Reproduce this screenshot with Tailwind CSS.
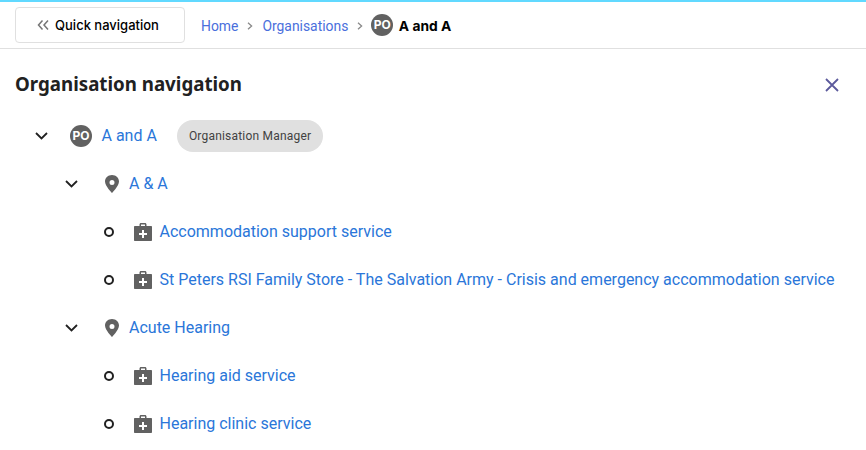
<!DOCTYPE html>
<html lang="en">

<head>
    <meta charset="UTF-8" />
    <title>Organisation navigation</title>
    <script src="https://cdn.jsdelivr.net/npm/@tailwindcss/browser@4"></script>
</head>

<body class="bg-white font-['Roboto',sans-serif] h-[450px] overflow-hidden">

    <!-- top bar -->
    <header class="h-[49px] border-t-2 border-b border-t-[#61d9ff] border-b-[#e0e0e0] flex items-center pl-[15px]">
        <button class="w-[170px] h-[36px] border border-[#e0e0e0] rounded flex items-center justify-center gap-[6px] text-[13px] font-['Inter',sans-serif] font-medium text-black -mt-[1px]">
            <svg class="w-3 h-3 -ml-[4px]" viewBox="0 0 12 12" fill="none" stroke="#757575" stroke-width="1.5"><path d="M5.500 1.500 1.500 6l4 4.500M11 1.500 7 6l4 4.500" /></svg>
            <span class="pt-[2px]">Quick navigation</span>
        </button>
        <nav class="flex items-center ml-4 text-[13.9px] text-[#4a6fdc] mt-[2px]">
            <a>Home</a>
            <svg class="w-2 h-2 mx-[8px]" viewBox="0 0 8 8" fill="none" stroke="#8a8a8a" stroke-width="1.3"><path d="M2 .8 5.600 4 2 7.200" /></svg>
            <a>Organisations</a>
            <svg class="w-2 h-2 mx-[7.500px]" viewBox="0 0 8 8" fill="none" stroke="#8a8a8a" stroke-width="1.3"><path d="M2 .8 5.600 4 2 7.200" /></svg>
            <span class="w-[22px] h-[22px] -mt-[2px] rounded-full bg-[#616161] text-white font-['Inter',sans-serif] text-xs font-bold flex items-center justify-center">PO</span>
            <span class="ml-[5.500px] font-['Inter',sans-serif] text-[13.8px] font-bold text-black">A and A</span>
        </nav>
    </header>

    <main class="relative">
        <h1 class="pl-[15px] pt-[23px] h-[63px] font-['Noto_Sans',sans-serif] text-[18.72px] leading-6 font-bold text-[#212121]">Organisation navigation</h1>
        <button class="absolute right-[26px] top-[28px]">
            <svg class="w-[16px] h-[16px]" viewBox="0 0 16 16" fill="none" stroke="#5c5a9c" stroke-width="1.8"><path d="M2 2l12 12M14 2 2 14" /></svg>
        </button>

        <ul class="text-base text-[#2a76d9]">
            <li class="h-[48px] flex items-center pl-[35px]">
                <svg class="w-[13px] h-[8px]" viewBox="0 0 13 8" fill="none" stroke="#212121" stroke-width="1.8"><path d="M1 1l5.500 5.500L12 1" /></svg>
                <span class="ml-[22px] w-[22px] h-[22px] rounded-full bg-[#616161] text-white font-['Inter',sans-serif] text-xs font-bold flex items-center justify-center">PO</span>
                <a class="ml-[9.500px]">A and A</a>
                <span class="ml-[20.500px] h-[32px] px-[11.500px] rounded-full bg-[#e0e0e0] text-xs text-[#424242] tracking-[0.2px] flex items-center">Organisation Manager</span>
            </li>
            <li class="h-[48px] flex items-center pl-[65px]">
                <svg class="w-[13px] h-[8px]" viewBox="0 0 13 8" fill="none" stroke="#212121" stroke-width="1.8"><path d="M1 1l5.500 5.500L12 1" /></svg>
                <svg class="ml-[26px] w-[16px] h-[20px]" viewBox="0 0 16 20" fill="#616161"><path fill-rule="evenodd" d="M8 1C4 1 1 3.900 1 7.500 1 12 8 19 8 19s7-7 7-11.500C15 3.900 12 1 8 1Zm0 10a2.500 2.500 0 1 1 0-5 2.500 2.500 0 0 1 0 5Z" /></svg>
                <a class="ml-[9px]">A &amp; A</a>
            </li>
            <li class="h-[48px] flex items-center pl-[104px]">
                <span class="w-[10px] h-[10px] -mt-[1px] rounded-full border-2 border-[#212121]"></span>
                <svg class="ml-[19px] w-[20px] h-[20px]" viewBox="0 0 20 20" fill="#616161"><path fill-rule="evenodd" d="M6.500 4V2.500C6.500 1.700 7.200 1 8 1h4c.8 0 1.500.7 1.500 1.500V4H18c.6 0 1 .4 1 1v13c0 .6-.4 1-1 1H2c-.6 0-1-.4-1-1V5c0-.6.4-1 1-1h4.500ZM8 2.500V4h4V2.500H8ZM9 8v3H6v2h3v3h2v-3h3v-2h-3V8H9Z" /></svg>
                <a class="ml-[6.500px]">Accommodation support service</a>
            </li>
            <li class="h-[48px] flex items-center pl-[104px]">
                <span class="w-[10px] h-[10px] -mt-[1px] rounded-full border-2 border-[#212121]"></span>
                <svg class="ml-[19px] w-[20px] h-[20px]" viewBox="0 0 20 20" fill="#616161"><path fill-rule="evenodd" d="M6.500 4V2.500C6.500 1.700 7.200 1 8 1h4c.8 0 1.500.7 1.500 1.500V4H18c.6 0 1 .4 1 1v13c0 .6-.4 1-1 1H2c-.6 0-1-.4-1-1V5c0-.6.4-1 1-1h4.500ZM8 2.500V4h4V2.500H8ZM9 8v3H6v2h3v3h2v-3h3v-2h-3V8H9Z" /></svg>
                <a class="ml-[6.500px] whitespace-nowrap">St Peters RSI Family Store - The Salvation Army - Crisis and emergency accommodation service</a>
            </li>
            <li class="h-[48px] flex items-center pl-[65px]">
                <svg class="w-[13px] h-[8px]" viewBox="0 0 13 8" fill="none" stroke="#212121" stroke-width="1.8"><path d="M1 1l5.500 5.500L12 1" /></svg>
                <svg class="ml-[26px] w-[16px] h-[20px]" viewBox="0 0 16 20" fill="#616161"><path fill-rule="evenodd" d="M8 1C4 1 1 3.900 1 7.500 1 12 8 19 8 19s7-7 7-11.500C15 3.900 12 1 8 1Zm0 10a2.500 2.500 0 1 1 0-5 2.500 2.500 0 0 1 0 5Z" /></svg>
                <a class="ml-[9px]">Acute Hearing</a>
            </li>
            <li class="h-[48px] flex items-center pl-[104px]">
                <span class="w-[10px] h-[10px] -mt-[1px] rounded-full border-2 border-[#212121]"></span>
                <svg class="ml-[19px] w-[20px] h-[20px]" viewBox="0 0 20 20" fill="#616161"><path fill-rule="evenodd" d="M6.500 4V2.500C6.500 1.700 7.200 1 8 1h4c.8 0 1.500.7 1.500 1.500V4H18c.6 0 1 .4 1 1v13c0 .6-.4 1-1 1H2c-.6 0-1-.4-1-1V5c0-.6.4-1 1-1h4.500ZM8 2.500V4h4V2.500H8ZM9 8v3H6v2h3v3h2v-3h3v-2h-3V8H9Z" /></svg>
                <a class="ml-[6.500px]">Hearing aid service</a>
            </li>
            <li class="h-[48px] flex items-center pl-[104px]">
                <span class="w-[10px] h-[10px] -mt-[1px] rounded-full border-2 border-[#212121]"></span>
                <svg class="ml-[19px] w-[20px] h-[20px]" viewBox="0 0 20 20" fill="#616161"><path fill-rule="evenodd" d="M6.500 4V2.500C6.500 1.700 7.200 1 8 1h4c.8 0 1.500.7 1.500 1.500V4H18c.6 0 1 .4 1 1v13c0 .6-.4 1-1 1H2c-.6 0-1-.4-1-1V5c0-.6.4-1 1-1h4.500ZM8 2.500V4h4V2.500H8ZM9 8v3H6v2h3v3h2v-3h3v-2h-3V8H9Z" /></svg>
                <a class="ml-[6.500px]">Hearing clinic service</a>
            </li>
        </ul>
    </main>

</body>

</html>
